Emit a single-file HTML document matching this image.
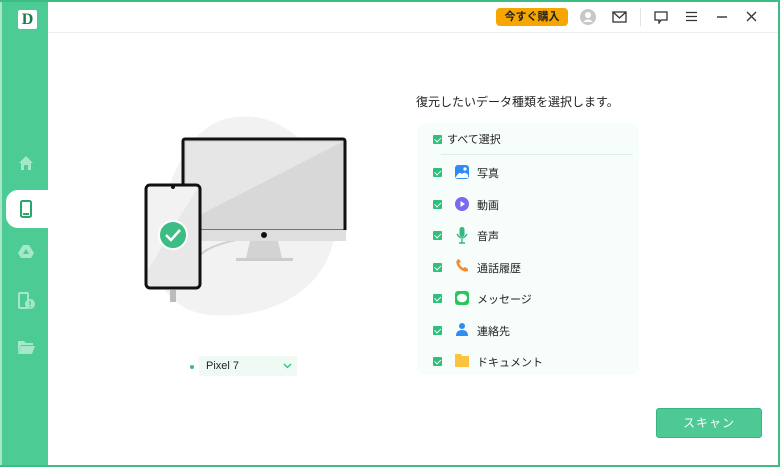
<!DOCTYPE html>
<html><head><meta charset="utf-8"><style>
*{margin:0;padding:0;box-sizing:border-box}
body{width:780px;height:467px;overflow:hidden;background:#fff;font-family:"Liberation Sans","Noto Sans CJK JP",sans-serif;position:relative}
.frame{position:absolute;inset:0;border:2px solid #3dbd83;border-left:none}
.side{position:absolute;left:0;top:0;width:48px;height:467px;background:#4ccb95;border-left:2px solid #a8e6cb}
.logo{position:absolute;left:16px;top:10px;width:19px;height:19px;background:#fff;border-radius:2px;color:#1c7a4a;font:bold 16px "Liberation Serif",serif;text-align:center;line-height:19px}
.tab{position:absolute;left:4px;top:190px;width:48px;height:38px;background:#fff;border-radius:12px 0 0 12px}
.hdr{position:absolute;left:48px;top:32px;right:2px;height:1px;background:#eceff0}
.buy{position:absolute;left:496px;top:8px;width:72px;height:18px;background:#f7a600;border-radius:4px;font-size:11px;font-weight:bold;color:#222;text-align:center;line-height:18px}
.t{position:absolute;font-size:12px;color:#222}
.panel{position:absolute;left:417px;top:123px;width:222px;height:252px;background:#f6fdfa;border-radius:8px}
.cb{position:absolute;width:9px;height:9px;background:#2fbf7d;border-radius:1px}
.cb:after{content:"";position:absolute;left:2.5px;top:1px;width:2.5px;height:4.5px;border:solid #fff;border-width:0 1.3px 1.3px 0;transform:rotate(45deg)}
.row{position:absolute;left:0;height:20px;font-size:11px;color:#222}
.btn{position:absolute;left:656px;top:408px;width:106px;height:30px;background:#4cc994;border:1px solid #39b57e;border-radius:3px;color:#fff;font-size:12px;text-align:center;line-height:28px;letter-spacing:1px}
</style></head><body>
<div class="side">
<div class="logo">D</div>
<svg style="position:absolute;left:16px;top:155px" width="16" height="16" viewBox="0 0 16 16"><path d="M8 1 L15 8 H13 V15 H10 V10 H6 V15 H3 V8 H1Z" fill="#a4e8c9"/></svg>
<div class="tab"></div>
<svg style="position:absolute;left:18px;top:200px" width="12" height="18" viewBox="0 0 12 18"><rect x="1" y="1" width="10" height="16" rx="1.5" fill="none" stroke="#2aa56c" stroke-width="2"/><rect x="3" y="13" width="6" height="2" fill="#2aa56c"/></svg>
<svg style="position:absolute;left:16px;top:244px" width="16" height="14" viewBox="0 0 16 14"><path d="M5 1 H11 L16 9 L13 14 H3 L0 9Z" fill="#a4e8c9"/><path d="M8 5 L11 10 H5Z" fill="#4ccb95"/></svg>
<svg style="position:absolute;left:16px;top:292px" width="18" height="18" viewBox="0 0 18 18"><rect x="1" y="1" width="9" height="15" rx="1" fill="none" stroke="#a4e8c9" stroke-width="2"/><circle cx="12" cy="12" r="5" fill="#a4e8c9"/><rect x="11.3" y="9" width="1.4" height="4" fill="#4ccb95"/><rect x="11.3" y="14" width="1.4" height="1.4" fill="#4ccb95"/></svg>
<svg style="position:absolute;left:16px;top:340px" width="17" height="14" viewBox="0 0 17 14"><path d="M0 1 H6 L8 3 H15 V5 H3 L0 13Z" fill="#a4e8c9"/><path d="M3 6 H17 L14 14 H0Z" fill="#a4e8c9"/></svg>
</div>
<div class="frame"></div>
<div class="hdr"></div>
<div class="buy">今すぐ購入</div>
<svg style="position:absolute;left:580px;top:9px" width="16" height="16" viewBox="0 0 16 16"><circle cx="8" cy="8" r="8" fill="#c8c8c8"/><circle cx="8" cy="6" r="3" fill="#fff"/><path d="M3 13 Q8 8 13 13" fill="#fff"/></svg>
<svg style="position:absolute;left:612px;top:11px" width="15" height="12" viewBox="0 0 15 12"><rect x="1" y="1" width="13" height="10" fill="none" stroke="#333" stroke-width="1.3"/><path d="M1 1 L7.5 7 L14 1" fill="none" stroke="#333" stroke-width="1.3"/></svg>
<div style="position:absolute;left:640px;top:8px;width:1px;height:18px;background:#e3e3e3"></div>
<svg style="position:absolute;left:654px;top:11px" width="14" height="13" viewBox="0 0 14 13"><path d="M1 1 H13 V9 H7 L5 12 V9 H1Z" fill="none" stroke="#333" stroke-width="1.3"/></svg>
<svg style="position:absolute;left:685px;top:11px" width="13" height="11"><path d="M1 1.5 H12 M1 5.5 H12 M1 9.5 H12" stroke="#333" stroke-width="1.3"/></svg>
<svg style="position:absolute;left:716px;top:11px" width="12" height="11"><path d="M1 6 H11" stroke="#333" stroke-width="1.4"/></svg>
<svg style="position:absolute;left:746px;top:11px" width="11" height="11"><path d="M1 1 L10 10 M10 1 L1 10" stroke="#333" stroke-width="1.3"/></svg>

<svg style="position:absolute;left:120px;top:110px" width="240" height="210" viewBox="0 0 240 210">
<path d="M110 8 C170 -5 220 60 215 120 C210 180 150 210 90 205 C40 200 20 150 40 100 C55 60 70 15 110 8Z" fill="#f2f2f2"/>
<path d="M80 145 Q100 125 200 122" fill="none" stroke="#cfcfcf" stroke-width="2"/>
<rect x="63" y="29" width="162" height="92" rx="2" fill="#d8d8d8" stroke="#111" stroke-width="3"/>
<path d="M66 32 H222 L66 112Z" fill="#e6e6e6"/>
<rect x="63" y="120" width="163" height="11" fill="#dedede"/>
<circle cx="144" cy="125" r="3" fill="#111"/>
<path d="M130 131 H158 L162 148 H126Z" fill="#d3d3d3"/>
<rect x="116" y="148" width="57" height="3" fill="#ccc"/>
<rect x="26" y="75" width="54" height="103" rx="4" fill="#e8e8e8" stroke="#111" stroke-width="3"/>
<path d="M28 77 H78 L28 160Z" fill="#f2f2f2"/>
<circle cx="53" cy="77" r="2" fill="#111"/>
<rect x="50" y="180" width="6" height="12" fill="#bbb"/>
<circle cx="53" cy="125" r="14" fill="#3dbd83" stroke="#fff" stroke-width="2"/>
<path d="M46 125 L51 130 L60 120" fill="none" stroke="#fff" stroke-width="2.5"/>
</svg>
<div style="position:absolute;left:190px;top:365px;width:4px;height:4px;border-radius:50%;background:#2fbf7d"></div>
<div style="position:absolute;left:199px;top:356px;width:98px;height:20px;background:#effaf5;font-size:11px;line-height:20px;padding-left:7px;color:#222">Pixel 7</div>
<svg style="position:absolute;left:283px;top:363px" width="9" height="6"><path d="M1 1 L4.5 4.5 L8 1" fill="none" stroke="#2fbf7d" stroke-width="1.3"/></svg>

<div class="t" style="left:416px;top:93px">復元したいデータ種類を選択します。</div>
<div class="panel">
<div class="cb" style="left:16px;top:12px"></div><div class="row" style="left:30px;top:8px">すべて選択</div>
<div style="position:absolute;left:24px;top:31px;width:192px;height:1px;background:#e0ebf0"></div>
<div class="cb" style="left:16px;top:45px"></div>
<svg style="position:absolute;left:38px;top:42px" width="14" height="14"><rect width="14" height="14" rx="3" fill="#2f8cf5"/><path d="M1 12 Q4 6 7 9 Q10 6 13 10 V13 H1Z" fill="#fff"/><circle cx="10" cy="4" r="1.6" fill="#fff"/></svg>
<div class="row" style="left:60px;top:42px">写真</div>
<div class="cb" style="left:16px;top:77px"></div>
<svg style="position:absolute;left:38px;top:74px" width="14" height="14"><circle cx="7" cy="7" r="7" fill="#7a6af0"/><path d="M5.5 4 L10 7 L5.5 10Z" fill="#fff"/></svg>
<div class="row" style="left:60px;top:74px">動画</div>
<div class="cb" style="left:16px;top:108px"></div>
<svg style="position:absolute;left:39px;top:104px" width="12" height="17"><rect x="3.5" y="0" width="5" height="10" rx="2.5" fill="#33b884"/><path d="M1 7 Q6 15 11 7 M6 12 V16 M3 16 H9" fill="none" stroke="#33b884" stroke-width="1.4"/></svg>
<div class="row" style="left:60px;top:105px">音声</div>
<div class="cb" style="left:16px;top:140px"></div>
<svg style="position:absolute;left:38px;top:136px" width="14" height="14"><path d="M2 1 Q0 4 4 9 Q9 14 13 12 L13 10 L10 8 L8 9 Q5 7 4 4 L6 3 L4 0Z" fill="#f88a2c"/></svg>
<div class="row" style="left:60px;top:137px">通話履歴</div>
<div class="cb" style="left:16px;top:171px"></div>
<svg style="position:absolute;left:38px;top:168px" width="14" height="14"><rect width="14" height="14" rx="3" fill="#28c75b"/><ellipse cx="7" cy="7" rx="5" ry="4.3" fill="#fff"/></svg>
<div class="row" style="left:60px;top:168px">メッセージ</div>
<div class="cb" style="left:16px;top:203px"></div>
<svg style="position:absolute;left:38px;top:199px" width="14" height="14"><circle cx="7" cy="4" r="3" fill="#2f8cf5"/><path d="M1 14 Q1 8 7 8 Q13 8 13 14Z" fill="#2f8cf5"/></svg>
<div class="row" style="left:60px;top:200px">連絡先</div>
<div class="cb" style="left:16px;top:234px"></div>
<svg style="position:absolute;left:38px;top:230px" width="14" height="14"><path d="M0 1 H6 L7 3 H14 V14 H0Z" fill="#fcc43e"/></svg>
<div class="row" style="left:60px;top:231px">ドキュメント</div>
</div>
<div class="btn">スキャン</div>
</body></html>
